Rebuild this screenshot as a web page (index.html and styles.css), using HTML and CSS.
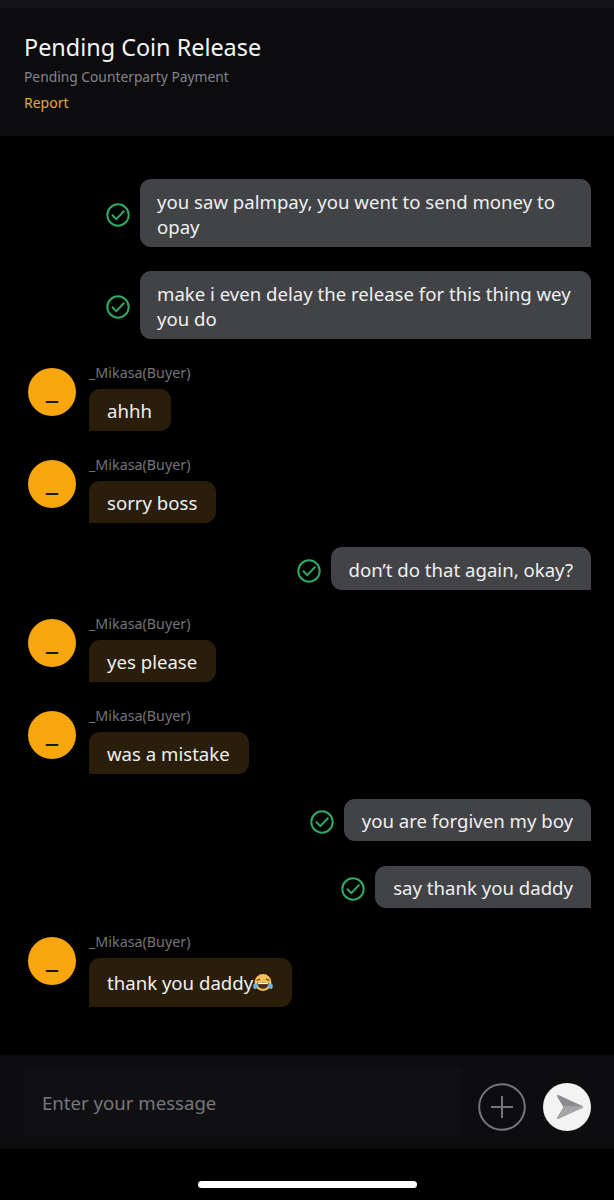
FILE: index.html
```html
<!DOCTYPE html>
<html lang="en">
<head>
    <meta charset="UTF-8">
    <meta name="viewport" content="width=device-width, initial-scale=1.0">
    <title>Pending Coin Release</title>
    <link rel="stylesheet" href="styles.css">
</head>
<body>
    <svg class="defs" width="0" height="0">
        <symbol id="tick" viewBox="0 0 24 24">
            <circle cx="12" cy="12" r="10.7" fill="none" stroke="#2faa63" stroke-width="2"/>
            <path d="M6 11.800l4.300 4.300 8-8.300" fill="none" stroke="#2faa63" stroke-width="2"/>
        </symbol>
    </svg>

    <header class="top">
        <h1>Pending Coin Release</h1>
        <p class="status">Pending Counterparty Payment</p>
        <a class="report">Report</a>
    </header>

    <main class="chat">
        <div class="msg out">
            <svg class="tick"><use href="#tick"/></svg>
            <div class="bubble wide">you saw palmpay, you went to send money to opay</div>
        </div>
        <div class="msg out">
            <svg class="tick"><use href="#tick"/></svg>
            <div class="bubble wide">make i even delay the release for this thing wey you do</div>
        </div>
        <div class="msg in">
            <div class="avatar">_</div>
            <div>
                <div class="name">_Mikasa(Buyer)</div>
                <div class="bubble">ahhh</div>
            </div>
        </div>
        <div class="msg in">
            <div class="avatar">_</div>
            <div>
                <div class="name">_Mikasa(Buyer)</div>
                <div class="bubble">sorry boss</div>
            </div>
        </div>
        <div class="msg out">
            <svg class="tick"><use href="#tick"/></svg>
            <div class="bubble">don’t do that again, okay?</div>
        </div>
        <div class="msg in">
            <div class="avatar">_</div>
            <div>
                <div class="name">_Mikasa(Buyer)</div>
                <div class="bubble">yes please</div>
            </div>
        </div>
        <div class="msg in">
            <div class="avatar">_</div>
            <div>
                <div class="name">_Mikasa(Buyer)</div>
                <div class="bubble">was a mistake</div>
            </div>
        </div>
        <div class="msg out later">
            <svg class="tick"><use href="#tick"/></svg>
            <div class="bubble">you are forgiven my boy</div>
        </div>
        <div class="msg out later">
            <svg class="tick"><use href="#tick"/></svg>
            <div class="bubble">say thank you daddy</div>
        </div>
        <div class="msg in">
            <div class="avatar">_</div>
            <div>
                <div class="name">_Mikasa(Buyer)</div>
                <div class="bubble tall">thank you daddy<svg class="emoji" viewBox="0 0 20 20">
                    <circle cx="10" cy="9.500" r="8.400" fill="#f4c252"/>
                    <path d="M3.600 7.600l3.600-1.600M16.400 7.600l-3.600-1.600" fill="none" stroke="#5b3a1a" stroke-width="1.100"/>
                    <path d="M4.200 9.800h11.600c0 3.800-2.600 6-5.800 6s-5.800-2.200-5.800-6z" fill="#4e2c1c"/>
                    <path d="M5 9.800h10v1.300H5z" fill="#fff"/>
                    <path d="M0.800 11c2-.6 3.600 0 4.600 1.600-.4 2-2.400 3.600-4.200 3.400-1-.8-1.400-3.200-.4-5z" fill="#6cb6ea"/>
                    <path d="M19.200 11c-2-.6-3.600 0-4.600 1.600.4 2 2.400 3.600 4.200 3.400 1-.8 1.400-3.200.4-5z" fill="#6cb6ea"/>
                </svg></div>
            </div>
        </div>
    </main>

    <footer class="composer">
        <div class="input">Enter your message</div>
        <svg class="plus" viewBox="0 0 48 48">
            <circle cx="24" cy="24" r="22.800" fill="none" stroke="#76767a" stroke-width="2"/>
            <path d="M24 13v22M13 24h22" fill="none" stroke="#76767a" stroke-width="2"/>
        </svg>
        <div class="send">
            <svg viewBox="0 0 48 48" width="48" height="48">
                <path d="M15 13l24 11H21.500z" fill="#8c8c8f" stroke="#8c8c8f" stroke-width="2" stroke-linejoin="round"/>
                <path d="M21.500 24H39L15 35z" fill="#a4a4a7" stroke="#a4a4a7" stroke-width="2" stroke-linejoin="round"/>
            </svg>
        </div>
    </footer>

    <div class="home-wrap"><div class="home"></div></div>
</body>
</html>
```

FILE: styles.css
```css
body {
    margin: 0;
    width: 614px;
    height: 1200px;
    overflow: hidden;
    background: #000;
    color: #fff;
    font-family: "Noto Sans", Arial, sans-serif;
}
.defs {
    display: block;
    height: 0;
}
.top {
    height: 136px;
    box-sizing: border-box;
    padding: 24px 24px 0;
    background: #0c0c0e;
    border-top: 8px solid #131316;
}
.top h1 {
    margin: 0;
    font-size: 23.4px;
    font-weight: 400;
    line-height: 30px;
    color: #f5f5f5;
}
.status {
    margin: 6px 0 0;
    font-size: 13.8px;
    line-height: 18px;
    color: #85858a;
}
.report {
    display: block;
    margin-top: 8px;
    font-size: 14px;
    line-height: 18px;
    color: #e8a93a;
}
.chat {
    height: 919px;
    box-sizing: border-box;
    padding: 43px 23px 0 28px;
    display: flex;
    flex-direction: column;
    gap: 24px;
}
.msg {
    display: flex;
}
.msg.out {
    justify-content: flex-end;
    align-items: center;
}
.msg.later {
    margin-top: 1px;
}
.msg.later .bubble {
    padding-top: 9px;
}
.tick {
    width: 24px;
    height: 24px;
    margin-top: 4px;
    margin-right: 10px;
    flex: none;
}
.bubble {
    font-size: 18.6px;
    line-height: 25px;
    padding: 10px 18px 8px;
    border-radius: 11px;
    color: #f0f0f0;
}
.bubble.wide {
    width: 451px;
    box-sizing: border-box;
    padding-left: 17px;
}
.out .bubble {
    background: #414347;
    border-bottom-right-radius: 0;
}
.in .bubble {
    display: inline-block;
    background: #2a1d0a;
    border-bottom-left-radius: 0;
    padding-top: 9px;
    padding-right: 19px;
}
.in .bubble.tall {
    padding-top: 12px;
    padding-bottom: 12px;
}
.emoji {
    width: 20px;
    height: 20px;
    vertical-align: -3px;
}
.avatar {
    width: 48px;
    height: 48px;
    margin-top: 5px;
    margin-right: 13px;
    border-radius: 50%;
    background: #f8a60d;
    color: #1a1a1a;
    font-size: 30px;
    font-weight: 700;
    line-height: 38px;
    text-align: center;
    flex: none;
}
.name {
    height: 26px;
    font-size: 14.3px;
    line-height: 20px;
    color: #74747a;
}
.composer {
    height: 94px;
    box-sizing: border-box;
    background: #0d0d10;
    padding: 0 23px 0 24px;
    display: flex;
    align-items: center;
}
.input {
    width: 436px;
    height: 69px;
    box-sizing: border-box;
    padding-left: 18px;
    background: #101013;
    font-size: 18.6px;
    line-height: 69px;
    color: #77777c;
}
.plus {
    width: 48px;
    height: 48px;
    margin-top: 9px;
    margin-left: 18px;
    margin-right: 17px;
}
.send {
    width: 48px;
    height: 48px;
    margin-top: 9px;
    border-radius: 50%;
    background: #f3f3f4;
}
.home-wrap {
    display: flex;
    justify-content: center;
    padding-top: 32px;
}
.home {
    width: 219px;
    height: 7px;
    border-radius: 4px;
    background: #fff;
}
```
